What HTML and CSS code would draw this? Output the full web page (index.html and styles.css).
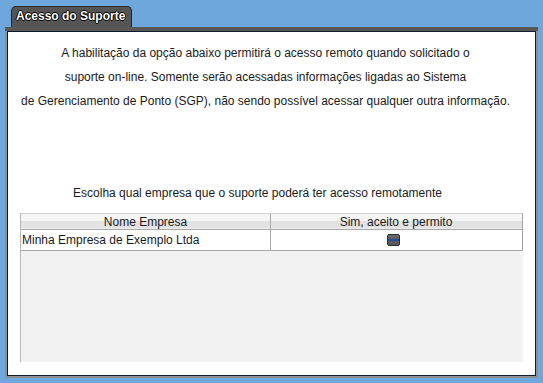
FILE: index.html
```html
<!DOCTYPE html>
<html lang="pt-BR">
<head>
    <meta charset="UTF-8">
    <title>Acesso do Suporte</title>
    <link rel="stylesheet" href="styles.css">
</head>
<body>
    <div id="window">
        <div class="tab">Acesso do Suporte</div>
        <div class="band"></div>
        <div class="panel">
            <div class="panel-body">
                <div class="notice">
                    <p>A habilitação da opção abaixo permitirá o acesso remoto quando solicitado o</p>
                    <p>suporte on-line. Somente serão acessadas informações ligadas ao Sistema</p>
                    <p>de Gerenciamento de Ponto (SGP), não sendo possível acessar qualquer outra informação.</p>
                </div>
                <div class="choose">Escolha qual empresa que o suporte poderá ter acesso remotamente</div>
                <div class="grid">
                    <div class="grid-head">
                        <div class="cell">Nome Empresa</div>
                        <div class="cell">Sim, aceito e permito</div>
                    </div>
                    <div class="grid-row">
                        <div class="cell name">Minha Empresa de Exemplo Ltda</div>
                        <div class="cell"><span class="check"></span></div>
                    </div>
                    <div class="grid-empty"></div>
                </div>
            </div>
        </div>
    </div>
</body>
</html>
```

FILE: styles.css
```css
body {
    margin: 0;
    padding: 6px 0 0 0;
    background-color: #6ea7dc;
    font-family: "Liberation Sans", Arial, sans-serif;
    font-size: 12px;
    color: #1a1a1a;
}
#window {
    margin: 0 5px;
    width: 533px;
}
.tab {
    margin-left: 6px;
    width: 121px;
    height: 21px;
    box-sizing: border-box;
    background-color: #555555;
    border: 1px solid #262626;
    border-bottom: none;
    border-radius: 5px 5px 0 0;
    color: #ffffff;
    font-weight: bold;
    font-size: 12px;
    line-height: 19px;
    padding-left: 4px;
    text-shadow: 1px 0 0 #000, -1px 0 0 #000, 0 1px 0 #000, 0 -1px 0 #000;
}
.band {
    height: 4px;
    background-color: #585858;
}
.panel {
    border: 2px solid #8e8e8e;
    border-top: none;
}
.panel-body {
    box-sizing: border-box;
    height: 345px;
    border: 1px solid #0d1a2b;
    background-color: #ffffff;
    padding-top: 9px;
}
.notice, .choose {
    margin-right: 12px;
    text-align: center;
}
.notice p {
    margin: 0;
    line-height: 24px;
}
.choose {
    margin-top: 68px;
    line-height: 24px;
    padding-right: 16px;
}
.grid {
    margin: 8px 0 0 12px;
    width: 502px;
    height: 149px;
    display: flex;
    flex-direction: column;
    border-left: 1px solid #b8b8b8;
}
.grid-head, .grid-row {
    display: grid;
    grid-template-columns: 250px 250px;
    border-right: 1px solid #a6a6a6;
}
.grid-head {
    height: 15px;
    border-top: 1px solid #d0d0d0;
    border-bottom: 1px solid #a8a8a8;
    background: linear-gradient(#f5f5f5 0, #f5f5f5 7px, #e2e2e2 7px, #e2e2e2 14px, #ededed 14px);
}
.grid-head .cell {
    text-align: center;
    line-height: 16px;
}
.grid-head .cell:first-child, .grid-row .cell:first-child {
    border-right: 1px solid #a8a8a8;
}
.grid-row {
    height: 20px;
    border-bottom: 1px solid #a8a8a8;
    background-color: #ffffff;
}
.grid-row .cell {
    line-height: 20px;
    text-align: center;
}
.grid-row .cell.name {
    text-align: left;
    padding-left: 1px;
}
.check {
    display: inline-block;
    box-sizing: border-box;
    width: 13px;
    height: 12px;
    margin-top: 4px;
    margin-left: -6px;
    vertical-align: top;
    background: linear-gradient(#6a6a6a 0, #5c5c5c 4px, #1f4f98 4px, #1f4f98 6px, #5a5a5a 6px);
    border: 1px solid #2b2b2b;
    border-radius: 2px;
}
.grid-empty {
    flex: 1;
    background-color: #f2f2f2;
}
```
